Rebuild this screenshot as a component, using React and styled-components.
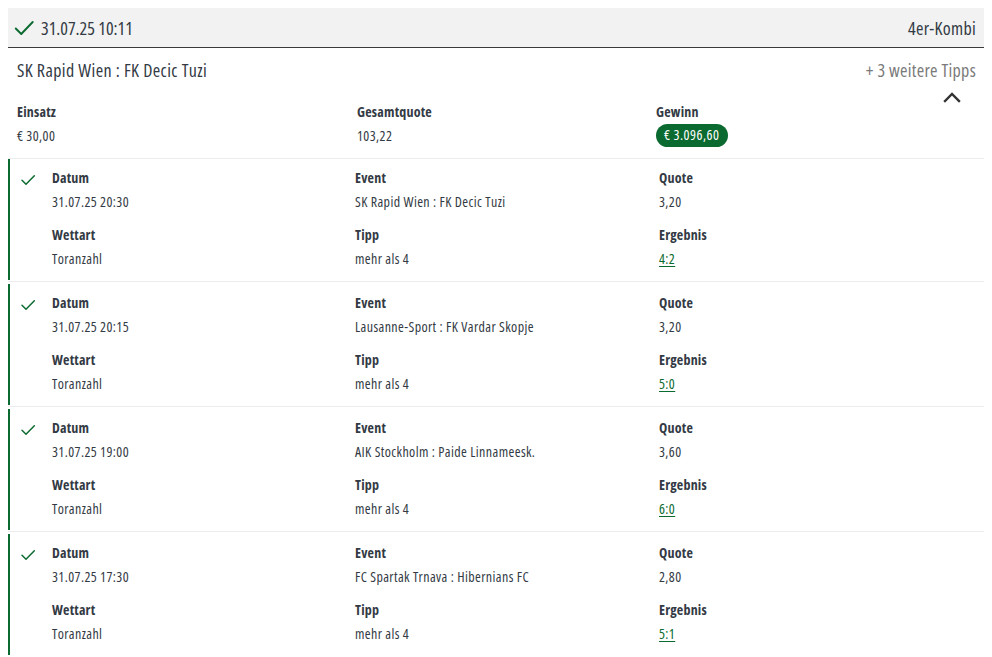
import React from "react";
import styled, { createGlobalStyle } from "styled-components";

const Global = createGlobalStyle`
  body {
    margin: 8px;
    background: #ffffff;
    font-family: "Open Sans", Roboto, sans-serif;
    font-stretch: 75%;
    letter-spacing: 0.3px;
    color: #333a44;
  }
  button { font-family: inherit; }
`;

const GREEN = "#0b6a30";

const Card = styled.div`
  width: 977px;
`;

const Header = styled.div`
  display: flex;
  align-items: center;
  justify-content: space-between;
  height: 40px;
  background: #f2f2f2;
  border-bottom: 1px solid #3a3a3a;
  padding: 1px 9px 0 5px;
  box-sizing: border-box;
  font-size: 18px;
`;

const HeaderLeft = styled.div`
  display: flex;
  align-items: center;
  gap: 6px;
  letter-spacing: 0;
`;

const TitleRow = styled.div`
  display: flex;
  justify-content: space-between;
  align-items: center;
  padding: 11px 9px 1px 9px;
  line-height: 22px;
`;

const Title = styled.div`
  font-size: 18px;
  letter-spacing: 0.4px;
`;

const More = styled.div`
  font-size: 18px;
  color: #7a7a7a;
`;

const Summary = styled.div`
  display: grid;
  grid-template-columns: 340px 299px 1fr auto;
  padding: 20px 24px 11px 9px;
  border-bottom: 1px solid #ececec;
`;

const Field = styled.div`
  display: flex;
  flex-direction: column;
  gap: 4px;
  align-items: flex-start;
`;

const Label = styled.div`
  font-size: 14px;
  font-weight: bold;
  letter-spacing: 0.2px;
  line-height: 20px;
`;

const Value = styled.div`
  font-size: 14px;
  line-height: 20px;
  letter-spacing: 0.4px;
`;

const Badge = styled.div`
  font-size: 14px;
  line-height: 20px;
  letter-spacing: 0.5px;
  color: #ffffff;
  background: ${GREEN};
  border-radius: 12px;
  padding: 1px 9px 2px 8px;
  margin-top: -2px;
`;

const Toggle = styled.button`
  align-self: start;
  margin-top: -12px;
  border: none;
  background: none;
  padding: 0;
  width: 18px;
  height: 14px;
  display: flex;
  align-items: center;
  justify-content: center;
`;

const Leg = styled.div`
  display: flex;
  border-left: 3px solid ${GREEN};
  margin-left: -1px;
  padding: 9px 0 11px 10px;
`;

const Divider = styled.div`
  height: 1px;
  background: #ececec;
  margin: 1px 0 2px 0;
`;

const IconCell = styled.div`
  width: 32px;
  padding-top: 3px;
`;

const LegGrid = styled.div`
  display: grid;
  grid-template-columns: 303px 304px 1fr;
  row-gap: 13px;
  flex: 1;
`;

const Result = styled.a`
  font-size: 14px;
  line-height: 20px;
  letter-spacing: 0.4px;
  color: ${GREEN};
  text-decoration: underline;
  text-underline-offset: 2px;
`;

const Check = ({ size = 18, w = 2.2 }) => (
  <svg width={size} height={size} viewBox="0 0 24 24" fill="none">
    <path d="M3 12.5l6 6L21.5 5.5" stroke={GREEN} strokeWidth={w} strokeLinecap="round" strokeLinejoin="round" />
  </svg>
);

const legs = [
  { date: "31.07.25 20:30", event: "SK Rapid Wien : FK Decic Tuzi", quote: "3,20", result: "4:2" },
  { date: "31.07.25 20:15", event: "Lausanne-Sport : FK Vardar Skopje", quote: "3,20", result: "5:0" },
  { date: "31.07.25 19:00", event: "AIK Stockholm : Paide Linnameesk.", quote: "3,60", result: "6:0" },
  { date: "31.07.25 17:30", event: "FC Spartak Trnava : Hibernians FC", quote: "2,80", result: "5:1" },
];

export default function App() {
  return (
    <>
      <Global />
      <Card>
        <Header>
          <HeaderLeft>
            <Check size={22} w={2.1} />
            <span>31.07.25 10:11</span>
          </HeaderLeft>
          <span>4er-Kombi</span>
        </Header>
        <TitleRow>
          <Title>SK Rapid Wien : FK Decic Tuzi</Title>
          <More>+ 3 weitere Tipps</More>
        </TitleRow>
        <Summary>
          <Field>
            <Label>Einsatz</Label>
            <Value>€ 30,00</Value>
          </Field>
          <Field>
            <Label>Gesamtquote</Label>
            <Value>103,22</Value>
          </Field>
          <Field>
            <Label>Gewinn</Label>
            <Badge>€ 3.096,60</Badge>
          </Field>
          <Toggle aria-label="Einklappen">
            <svg width="18" height="12" viewBox="0 0 18 12" fill="none">
              <path d="M2 10L9 3l7 7" stroke="#333" strokeWidth="2.4" strokeLinecap="square" />
            </svg>
          </Toggle>
        </Summary>
        {legs.map((l, i) => (
          <React.Fragment key={i}>
            {i > 0 && <Divider />}
            <Leg>
              <IconCell>
                <Check size={16} w={2.2} />
              </IconCell>
              <LegGrid>
                <Field>
                  <Label>Datum</Label>
                  <Value>{l.date}</Value>
                </Field>
                <Field>
                  <Label>Event</Label>
                  <Value>{l.event}</Value>
                </Field>
                <Field>
                  <Label>Quote</Label>
                  <Value>{l.quote}</Value>
                </Field>
                <Field>
                  <Label>Wettart</Label>
                  <Value>Toranzahl</Value>
                </Field>
                <Field>
                  <Label>Tipp</Label>
                  <Value>mehr als 4</Value>
                </Field>
                <Field>
                  <Label>Ergebnis</Label>
                  <Result href="#">{l.result}</Result>
                </Field>
              </LegGrid>
            </Leg>
          </React.Fragment>
        ))}
      </Card>
    </>
  );
}
